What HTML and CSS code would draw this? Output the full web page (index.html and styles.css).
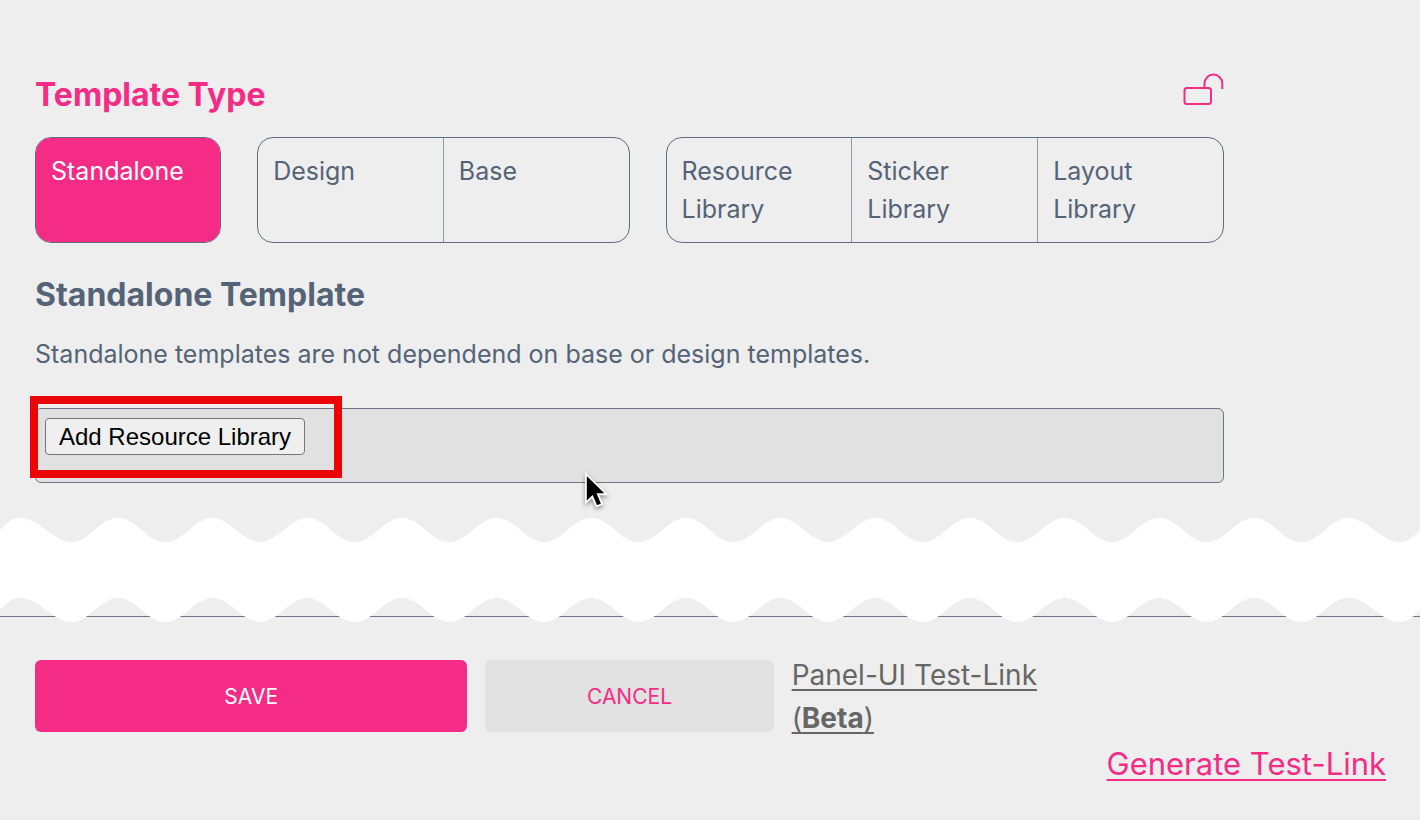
FILE: index.html
```html
<!DOCTYPE html>
<html lang="en">
<head>
    <meta charset="UTF-8">
    <meta name="viewport" content="width=device-width, initial-scale=1.0">
    <title>Template Type</title>
    <link rel="stylesheet" href="styles.css">
</head>
<body>
    <main class="content">
        <div class="title-row">
            <h1>Template Type</h1>
            <svg class="lock" viewBox="0 0 42 34" aria-hidden="true">
                <rect x="2.500" y="15" width="26.500" height="16" rx="2.500"/>
                <path d="M22.500 15v-4.500a8.900 8.900 0 0 1 17.800 0v5.500"/>
            </svg>
        </div>

        <div class="types">
            <div class="type-group">
                <button type="button" class="type active">Standalone</button>
            </div>
            <div class="type-group">
                <button type="button" class="type">Design</button>
                <button type="button" class="type">Base</button>
            </div>
            <div class="type-group">
                <button type="button" class="type">Resource<br>Library</button>
                <button type="button" class="type">Sticker<br>Library</button>
                <button type="button" class="type">Layout<br>Library</button>
            </div>
        </div>

        <h2>Standalone Template</h2>
        <p>Standalone templates are not dependend on base or design templates.</p>

        <div class="libraries">
            <button type="button" class="add-library">Add Resource Library</button>
            <div class="highlight"></div>
            <svg class="cursor" viewBox="0 0 28 42" aria-hidden="true">
                <path d="M2 2v31l7-6.500 4.500 10.500 6-2.500-4.500-10.500h9.500z"/>
            </svg>
        </div>
    </main>

    <svg class="tear" viewBox="0 0 1420 104" preserveAspectRatio="none" aria-hidden="true">
        <path d="M0 12c8-8 11-12 20-12c20 0 33 24 51.500 24s28-24 46.500-24
            s29 24 47.330 24s29-24 47.340-24s29 24 47.330 24s29-24 47.340-24
            s29 24 47.330 24s29-24 47.340-24s29 24 47.330 24s29-24 47.340-24
            s29 24 47.330 24s29-24 47.340-24s29 24 47.330 24s29-24 47.340-24
            s29 24 47.330 24s29-24 47.340-24s29 24 47.330 24s29-24 47.340-24
            s29 24 47.330 24s29-24 47.340-24s29 24 47.330 24s29-24 47.340-24
            s29 24 47.330 24s29-24 47.340-24s29 24 47.330 24s29-24 47.340-24
            s29 24 47.330 24s29-24 47.340-24
            s33 24 50.500 24c9 0 13-4 20.800-12V92
            c-8 8-12 12-20.800 12c-18 0-31-24-50.500-24
            s-29 24-47.340 24s-29-24-47.330-24s-29 24-47.340 24s-29-24-47.330-24
            s-29 24-47.340 24s-29-24-47.330-24s-29 24-47.340 24s-29-24-47.330-24
            s-29 24-47.340 24s-29-24-47.330-24s-29 24-47.340 24s-29-24-47.330-24
            s-29 24-47.340 24s-29-24-47.330-24s-29 24-47.340 24s-29-24-47.330-24
            s-29 24-47.340 24s-29-24-47.330-24s-29 24-47.340 24s-29-24-47.330-24
            s-29 24-47.340 24s-29-24-47.330-24s-29 24-47.340 24s-29-24-47.330-24
            s-29 24-47.340 24s-29-24-47.330-24
            s-28 24-46.500 24s-31-24-51.500-24c-9 0-12 4-20 12z"/>
    </svg>

    <footer>
        <div class="actions">
            <button type="button" class="save">SAVE</button>
            <button type="button" class="cancel">CANCEL</button>
            <a class="panel-link" href="#">Panel-UI Test-Link<br>(<b>Beta</b>)</a>
        </div>
        <a class="generate" href="#">Generate Test-Link</a>
    </footer>
</body>
</html>
```
FILE: styles.css
```css
* {
    box-sizing: border-box;
}
body {
    margin: 0;
    background-color: #eeeeee;
    color: #556377;
    font-family: Inter, "Liberation Sans", sans-serif;
}
button {
    font-family: inherit;
    cursor: pointer;
}
.content {
    padding: 72px 196px 0 35px;
}
.title-row {
    display: flex;
    justify-content: space-between;
    align-items: flex-start;
    margin-bottom: 19px;
}
h1, h2, p {
    margin: 0;
}
h1, h2 {
    font-size: 32px;
    line-height: 46px;
    font-weight: 700;
}
h1 {
    color: #f52c86;
}
.lock {
    width: 42px;
    height: 34px;
    margin-top: 1px;
    fill: none;
    stroke: #f52c86;
    stroke-width: 2;
}

/* Type selector */
.types {
    display: grid;
    grid-template-columns: 1fr 2fr 3fr;
    gap: 36px;
}
.type-group {
    display: flex;
    height: 106px;
    border: 1px solid #5f6b80;
    border-radius: 16px;
    overflow: hidden;
}
.type {
    flex: 1;
    display: flex;
    align-items: flex-start;
    padding: 14px 15px;
    border: none;
    background: none;
    color: #556377;
    font-size: 25px;
    line-height: 38px;
    text-align: left;
}
.type + .type {
    border-left: 1px solid #8f98a6;
}
.type.active {
    background-color: #f52c86;
    color: #ffffff;
}

h2 {
    margin-top: 29px;
}
p {
    margin: 17px 0 35px;
    font-size: 25px;
    line-height: 38px;
}

.libraries {
    position: relative;
    height: 75px;
    padding: 9px;
    background-color: #e1e1e1;
    border: 1px solid #6b7689;
    border-radius: 6px;
}
.add-library {
    display: block;
    height: 37px;
    padding: 0 13px;
    border: 1px solid #767676;
    border-radius: 4px;
    background-color: #efefef;
    color: #000000;
    font-family: "Liberation Sans", Arial, sans-serif;
    font-size: 24px;
}
.highlight {
    position: absolute;
    top: -13px;
    left: -6px;
    width: 312px;
    height: 82px;
    border: 8px solid #ea0606;
    pointer-events: none;
}
.cursor {
    position: absolute;
    top: 63px;
    left: 548px;
    z-index: 2;
    width: 26px;
    height: 39px;
    overflow: visible;
    fill: #000000;
    stroke: #ffffff;
    stroke-width: 2;
    filter: drop-shadow(0 2px 2px rgba(0, 0, 0, 0.4));
}

/* Torn paper gap, overlaps the footer line */
.tear {
    display: block;
    position: relative;
    width: 100%;
    height: 104px;
    margin: 35px 0 -6px;
    fill: #ffffff;
}

footer {
    padding-bottom: 34px;
    border-top: 1px solid #6b7689;
}
.actions {
    display: grid;
    grid-template-columns: 3fr 2fr 3fr;
    gap: 18px;
    align-items: start;
    padding: 43px 196px 0 35px;
}
.save, .cancel {
    height: 72px;
    border: none;
    border-radius: 6px;
    font-size: 21px;
}
.save {
    background-color: #f52c86;
    color: #ffffff;
}
.cancel {
    background-color: #e1e1e1;
    color: #f52c86;
}
a {
    text-underline-offset: 4px;
    text-decoration-thickness: 2px;
}
.panel-link {
    margin-top: -6px;
    color: #666666;
    font-size: 28px;
    line-height: 43px;
}
.generate {
    display: block;
    width: fit-content;
    margin: 0 34px 0 auto;
    color: #f52c86;
    font-size: 31px;
    line-height: 48px;
}
```
